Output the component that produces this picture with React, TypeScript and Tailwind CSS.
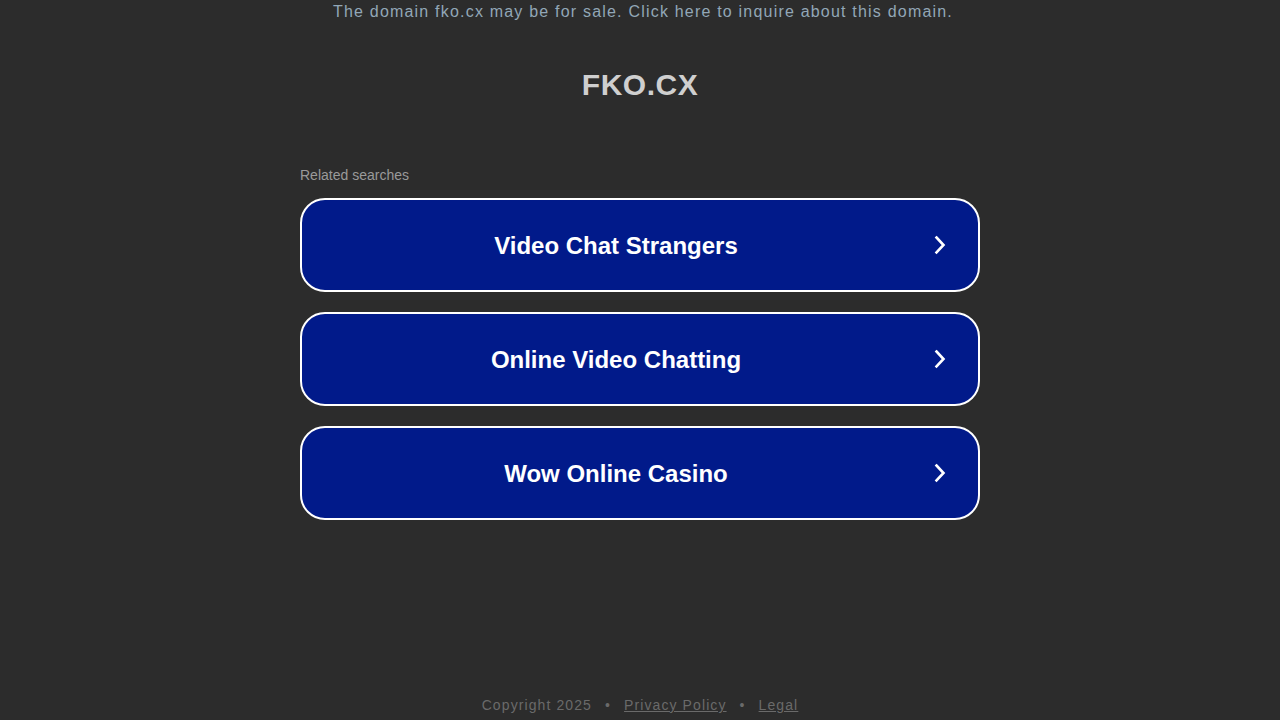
const SEARCHES = ["Video Chat Strangers", "Online Video Chatting", "Wow Online Casino"];

const Chevron = () => (
  <svg viewBox="0 0 20 20" className="w-5 h-5 shrink-0" fill="none" stroke="white" strokeWidth="2.6" strokeLinecap="square">
    <path d="M6.5 2.5 L13.5 10 L6.5 17.5" />
  </svg>
);

export default function App() {
  return (
    <div className="min-h-[720px] h-[720px] bg-[#2c2c2c] flex flex-col font-['Liberation_Sans',Arial,sans-serif]">
      {/* Sale banner */}
      <p className="pl-[6px] text-center text-[16px] leading-[24px] tracking-[1.2px] text-[#92a7b7]">
        The domain fko.cx may be for sale. Click here to inquire about this domain.
      </p>

      {/* Domain title */}
      <h1 className="mt-[44px] text-center text-[30px] leading-[34px] font-bold tracking-[0.5px] text-[#cfcfcf]">
        FKO.CX
      </h1>

      {/* Related searches */}
      <div className="w-[680px] mx-auto mt-[63px]">
        <p className="text-[14px] leading-[20px] text-[#9a9a9a] mb-[13px]">Related searches</p>
        <div className="flex flex-col gap-[20px]">
          {SEARCHES.map(s => (
            <div
              key={s}
              className="h-[94px] rounded-[25px] border-2 border-white bg-[#011a8a] flex items-center pr-[28px]"
            >
              <span className="flex-1 text-center text-[24px] leading-[30px] pt-[2px] font-bold text-white">{s}</span>
              <Chevron />
            </div>
          ))}
        </div>
      </div>

      {/* Footer */}
      <div className="mt-auto pb-[5px] flex justify-center items-center gap-[13px] text-[14px] leading-[20px] tracking-[1.1px] text-[#6a6a6a]">
        <span>Copyright 2025</span>
        <span>•</span>
        <span className="underline">Privacy Policy</span>
        <span>•</span>
        <span className="underline">Legal</span>
      </div>
    </div>
  );
}
